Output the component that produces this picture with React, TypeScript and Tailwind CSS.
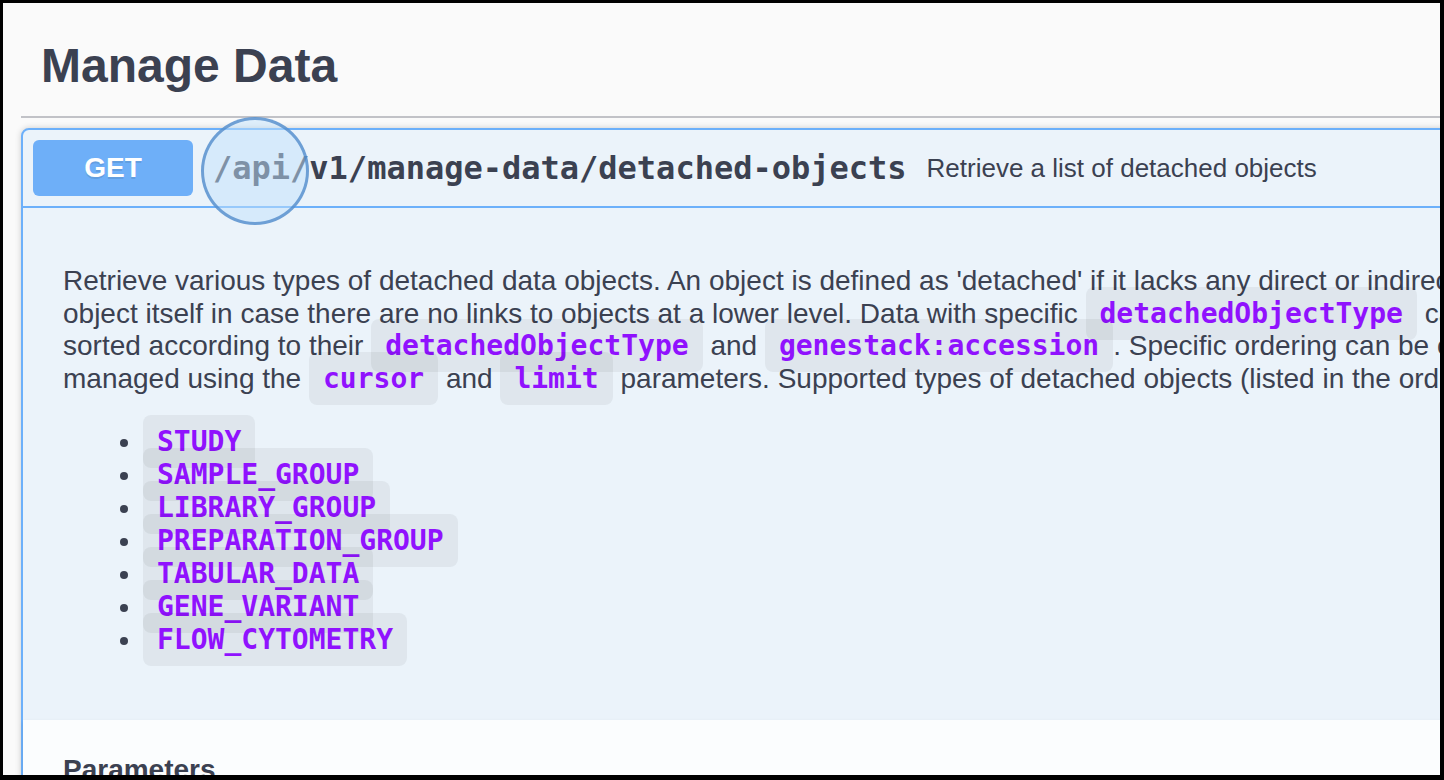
import React from 'react';

const Code = ({ children }: { children: React.ReactNode }) => (
  <code className="font-['DejaVu_Sans_Mono',monospace] font-bold text-[#9012fe] bg-black/5 rounded-[8px] px-[14px] py-[10px]">
    {children}
  </code>
);

const types = [
  'STUDY',
  'SAMPLE_GROUP',
  'LIBRARY_GROUP',
  'PREPARATION_GROUP',
  'TABULAR_DATA',
  'GENE_VARIANT',
  'FLOW_CYTOMETRY',
];

export default function App() {
  return (
    <div className="w-[1444px] h-[780px] bg-black pt-[3px] pl-[3px] pr-[4px] pb-[5px]">
      <div className="relative h-full w-full overflow-hidden bg-[#fafafa] font-['Liberation_Sans',Arial,sans-serif] text-[#3b4151]">
        <div className="w-[1700px] pl-[18px]">
          {/* tag header */}
          <div className="pt-[35px] pb-[22px] pl-[20px] border-b-2 border-[#c1c2c7]">
            <h3 className="text-[48px] leading-[56px] font-bold">Manage Data</h3>
          </div>

          {/* operation block */}
          <div className="mt-[10px] border-2 border-[#6cb0fa] rounded-[8px] bg-[#ebf3fa] shadow-[0_0_6px_rgba(0,0,0,0.19)]">
            <div className="flex items-center p-[10px] border-b-2 border-[#6cb0fa]">
              <div className="w-[160px] h-[56px] rounded-[6px] bg-[#6eaff8] text-white font-bold text-[28px] flex items-center justify-center [text-shadow:0_2px_0_rgba(0,0,0,0.1)]">
                GET
              </div>
              <span className="px-[20px] font-['DejaVu_Sans_Mono',monospace] font-bold text-[32px] whitespace-nowrap">
                /api/v1/manage-data/detached-objects
              </span>
              <span className="text-[26px] whitespace-nowrap">Retrieve a list of detached objects</span>
            </div>

            <div className="pt-[57px] pb-[64px] px-[40px] text-[28px]">
              <div className="leading-[32.5px] whitespace-nowrap">
                <div>
                  Retrieve various types of detached data objects. An object is defined as 'detached' if it lacks any direct or indirect links to other objects, or the
                </div>
                <div>
                  object itself in case there are no links to objects at a lower level. Data with specific <Code>detachedObjectType</Code> can be retrieved and
                </div>
                <div>
                  sorted according to their <Code>detachedObjectType</Code> and <Code>genestack:accession</Code>. Specific ordering can be changed and paging is
                </div>
                <div>
                  managed using the <Code>cursor</Code> and <Code>limit</Code> parameters. Supported types of detached objects (listed in the order):
                </div>
              </div>
              <ul className="mt-[30px] pl-[80px] list-disc">
                {types.map((t) => (
                  <li key={t} className="leading-[33px]">
                    <Code>{t}</Code>
                  </li>
                ))}
              </ul>
            </div>

            <div className="min-h-[100px] flex items-center px-[40px] bg-white/80 shadow-[0_2px_4px_rgba(0,0,0,0.1)]">
              <h4 className="text-[28px] leading-[32px] font-bold">Parameters</h4>
            </div>
          </div>
        </div>

        {/* highlight circle */}
        <div className="absolute left-[198px] top-[114px] w-[108px] h-[108px] rounded-full border-[3px] border-[#4a86c8]/75 bg-[#c2e1fc]/50" />
      </div>
    </div>
  );
}
